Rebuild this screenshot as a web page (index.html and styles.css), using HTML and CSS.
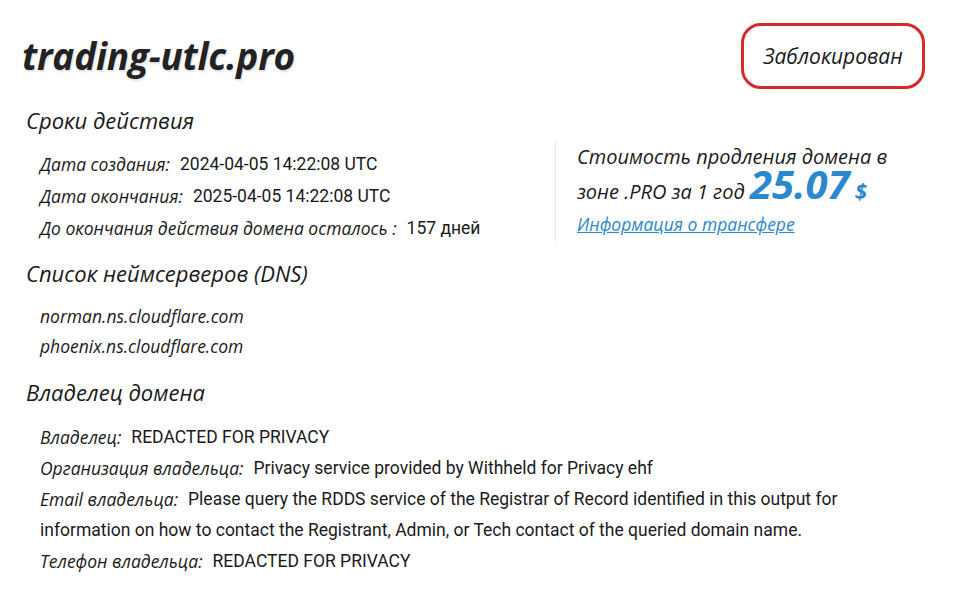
FILE: index.html
```html
<!DOCTYPE html>
<html lang="ru">
<head>
<meta charset="utf-8">
<link rel="stylesheet" href="styles.css">
</head>
<body>
<div class="page">
  <div class="top">
    <h1 class="domain">trading-utlc.pro</h1>
    <div class="status">Заблокирован</div>
  </div>

  <h2 class="section first">Сроки действия</h2>
  <div class="dates">
    <div class="rows date-rows">
      <div class="row"><span class="label">Дата создания:</span><span class="value">2024-04-05 14:22:08 UTC</span></div>
      <div class="row"><span class="label">Дата окончания:</span><span class="value">2025-04-05 14:22:08 UTC</span></div>
      <div class="row"><span class="label">До окончания действия домена осталось :</span><span class="value">157 дней</span></div>
    </div>
    <div class="price">
      <div class="price-line">Стоимость продления домена в</div>
      <div class="price-line second">зоне .PRO за 1 год <span class="amount">25.07</span> <span class="cur">$</span></div>
      <a class="transfer" href="#">Информация о трансфере</a>
    </div>
  </div>

  <h2 class="section after-dates">Список неймсерверов (DNS)</h2>
  <div class="rows ns-rows">
    <div class="row ns">norman.ns.cloudflare.com</div>
    <div class="row ns">phoenix.ns.cloudflare.com</div>
  </div>

  <h2 class="section after-ns">Владелец домена</h2>
  <div class="rows owner">
    <div class="row"><span class="label">Владелец:</span><span class="value">REDACTED FOR PRIVACY</span></div>
    <div class="row"><span class="label">Организация владельца:</span><span class="value">Privacy service provided by Withheld for Privacy ehf</span></div>
    <div class="row"><span class="label">Email владельца:</span><span class="value">Please query the RDDS service of the Registrar of Record identified in this output for information on how to contact the Registrant, Admin, or Tech contact of the queried domain name.</span></div>
    <div class="row"><span class="label">Телефон владельца:</span><span class="value">REDACTED FOR PRIVACY</span></div>
  </div>
</div>
</body>
</html>
```

FILE: styles.css
```css
html, body {
  margin: 0;
  padding: 0;
  background: #ffffff;
}

body {
  font-family: "Open Sans", "DejaVu Sans", sans-serif;
  color: #1a1a1a;
}

.page {
  padding: 22px 29px 0 22px;
}

.top {
  display: flex;
  justify-content: space-between;
  align-items: flex-start;
}

.domain {
  margin: 10px 0 0 0;
  font-size: 37px;
  font-weight: 700;
  font-style: italic;
  line-height: 48px;
  color: #222222;
  letter-spacing: -0.2px;
  text-shadow: 1px 2px 2px rgba(0, 0, 0, 0.12);
}

.status {
  margin-top: 1px;
  width: 178px;
  height: 60px;
  border: 3px solid #d42a2a;
  border-radius: 20px;
  display: flex;
  align-items: center;
  justify-content: center;
  font-style: italic;
  font-size: 21px;
  color: #1a1a1a;
}

.section {
  margin: 0;
  padding-left: 4px;
  font-size: 22px;
  font-weight: 400;
  font-style: italic;
  line-height: 30px;
  color: #1a1a1a;
}

.section.first {
  margin-top: 16px;
}

.section.after-dates {
  margin-top: 14px;
}

.section.after-ns {
  margin-top: 16px;
}

.dates {
  display: flex;
  align-items: flex-start;
  margin-top: 13px;
}

.rows {
  display: flex;
  flex-direction: column;
  padding-left: 18px;
}

.date-rows {
  width: 515px;
  flex: none;
}

.date-rows .row {
  line-height: 32px;
}

.ns-rows {
  margin-top: 13px;
}

.ns-rows .row {
  line-height: 30px;
}

.owner {
  margin-top: 15px;
  width: 830px;
}

.row {
  font-size: 17.5px;
  line-height: 31px;
}

.label,
.value {
  vertical-align: top;
}

.label {
  font-style: italic;
  font-size: 17.5px;
  margin-right: 10px;
  color: #1a1a1a;
}

.value {
  font-family: Roboto, "Liberation Sans", sans-serif;
  font-size: 17.5px;
  color: #1a1a1a;
}

.ns {
  font-style: italic;
}

.price {
  display: flex;
  flex-direction: column;
  align-items: flex-start;
  border-left: 1px solid #e4e4e4;
  padding-left: 21px;
  margin-top: -7px;
  padding-bottom: 4px;
}

.price-line {
  font-style: italic;
  font-size: 20px;
  line-height: 32px;
  height: 32px;
}

.price-line.second {
  margin-top: 3px;
}

.amount {
  font-size: 40px;
  font-weight: 700;
  font-style: italic;
  color: #2a88cc;
  line-height: 0;
}

.cur {
  font-size: 22px;
  font-weight: 700;
  color: #2a88cc;
  line-height: 0;
}

.transfer {
  margin-top: 3px;
  font-style: italic;
  font-size: 17.5px;
  line-height: 26px;
  color: #2a88cc;
  text-decoration: underline;
}
```
